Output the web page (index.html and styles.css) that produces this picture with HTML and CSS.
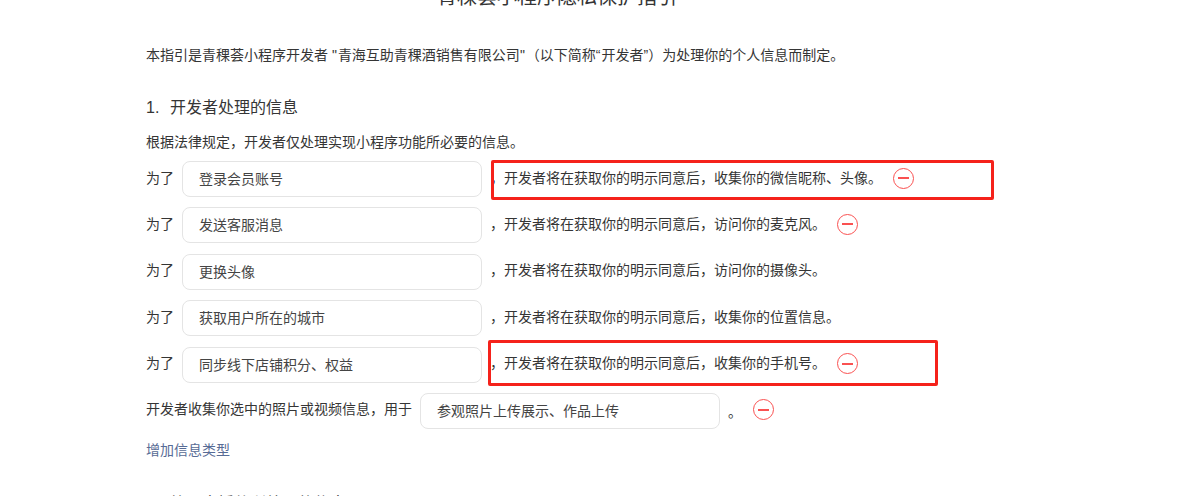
FILE: index.html
```html
<!DOCTYPE html>
<html lang="zh">
<head>
<meta charset="utf-8">
<title>隐私保护指引</title>
<link rel="stylesheet" href="styles.css">
</head>
<body>
<main class="page">
  <h1 class="title">青稞荟小程序隐私保护指引</h1>
  <p class="intro">本指引是青稞荟小程序开发者 <span class="q">"</span>青海互助青稞酒销售有限公司<span class="q">"</span>（以下简称<span class="q">“</span>开发者”）为处理你的个人信息而制定。</p>
  <h2 class="heading"><span class="num">1.</span>开发者处理的信息</h2>
  <p class="lead">根据法律规定，开发者仅处理实现小程序功能所必要的信息。</p>
  <div class="rows">
    <div class="row"><span>为了</span><span class="field">登录会员账号</span><span class="desc">，开发者将在获取你的明示同意后，收集你的微信昵称、头像。</span><span class="minus"></span></div>
    <div class="row"><span>为了</span><span class="field">发送客服消息</span><span class="desc">，开发者将在获取你的明示同意后，访问你的麦克风。</span><span class="minus"></span></div>
    <div class="row"><span>为了</span><span class="field">更换头像</span><span class="desc">，开发者将在获取你的明示同意后，访问你的摄像头。</span></div>
    <div class="row"><span>为了</span><span class="field">获取用户所在的城市</span><span class="desc">，开发者将在获取你的明示同意后，收集你的位置信息。</span></div>
    <div class="row"><span>为了</span><span class="field">同步线下店铺积分、权益</span><span class="desc">，开发者将在获取你的明示同意后，收集你的手机号。</span><span class="minus"></span></div>
    <div class="row"><span>开发者收集你选中的照片或视频信息，用于</span><span class="field">参观照片上传展示、作品上传</span><span class="period">。</span><span class="minus"></span></div>
  </div>
  <a class="add" href="#">增加信息类型</a>
  <h2 class="heading next"><span class="num">2.</span>第三方插件所处理的信息</h2>
</main>
<div class="mark mark-a"></div>
<div class="mark mark-b"></div>
</body>
</html>
```

FILE: styles.css
```css
html, body {
  margin: 0;
  height: 496px;
  overflow: hidden;
  background: #fff;
}
body {
  position: relative;
  font-family: "Liberation Sans", "Noto Sans CJK SC", sans-serif;
  color: #353535;
  font-size: 14px;
}
.page {
  width: 822px;
  margin-left: 146px;
}
.title {
  margin: -15px 0 0;
  height: 24px;
  line-height: 24px;
  font-size: 20px;
  font-weight: 400;
  text-align: center;
}
.intro {
  margin: 34px 0 0;
  line-height: 24px;
  height: 24px;
}
.q {
  letter-spacing: 1px;
}
.heading {
  margin: 29px 0 0;
  height: 24px;
  line-height: 24px;
  font-size: 16px;
  font-weight: 400;
}
.num {
  display: inline-block;
  width: 24px;
}
.lead {
  margin: 10px 0 0;
  height: 24px;
  line-height: 24px;
}
.rows {
  margin-top: 7px;
  display: flex;
  flex-direction: column;
  gap: 10.4px;
}
.row {
  display: flex;
  align-items: center;
  height: 36px;
  white-space: nowrap;
}
.row > span:first-child {
  margin-right: 8px;
  position: relative;
  top: -2.5px;
}
.field {
  box-sizing: border-box;
  width: 300px;
  height: 36px;
  line-height: 34px;
  padding-left: 16px;
  border: 1px solid #e4e4e4;
  border-radius: 8px;
  color: #444;
}
.desc {
  margin-left: 8px;
  position: relative;
  top: -2.5px;
}
.period {
  margin-left: 8px;
}
.minus {
  position: relative;
  top: -1px;
  box-sizing: border-box;
  width: 21px;
  height: 21px;
  margin-left: 11px;
  border: 1px solid #fa5151;
  border-radius: 50%;
  display: flex;
  align-items: center;
  justify-content: center;
}
.minus::before {
  content: "";
  width: 11px;
  height: 2px;
  background: #fa5151;
}
.add {
  display: block;
  margin-top: 9px;
  height: 24px;
  line-height: 24px;
  color: #576b95;
  text-decoration: none;
}
.heading.next {
  margin-top: 30px;
}
.mark {
  position: absolute;
  box-sizing: border-box;
  border: 3px solid #f5221b;
  border-radius: 2px;
}
.mark-a {
  left: 491px;
  top: 160px;
  width: 503px;
  height: 40px;
}
.mark-b {
  left: 488px;
  top: 340px;
  width: 450px;
  height: 46px;
}
```
